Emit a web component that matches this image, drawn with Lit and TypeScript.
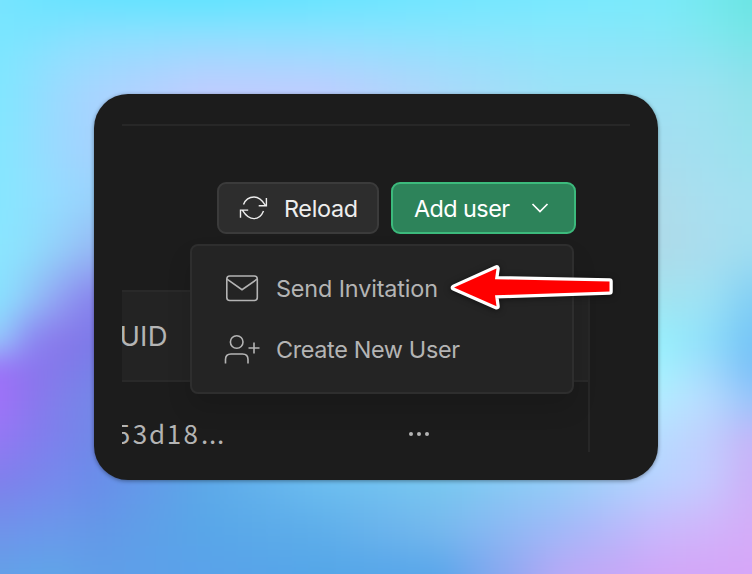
import { LitElement, html, css, svg } from "lit";
import { customElement } from "lit/decorators.js";

// Colour nodes of the backdrop; values between the nodes are interpolated.
const xs = [0, 30, 62, 94, 200, 320, 440, 560, 658, 705, 752];
const ys = [0, 30, 60, 94, 150, 200, 250, 300, 340, 370, 400, 440, 480, 530, 574];
const nodes = [
  "78e4ff 6ee4ff 6ae3ff 66e2ff 60e4ff 68e4ff 72e6ff 78e8fe 7aeafa 74e8f0 6ae4e2",
  "78e6ff 7ae4ff 80e2ff 86e1ff 88e1ff 88e2ff 86e5fe 86e8fc 84e8f8 7ee8f0 74e6e6",
  "7ee6ff 88e2ff 92dfff 9adbff a8d6ff a6d8ff 9cdefc 92e4fa 90e4f6 8ee4f2 84e2ea",
  "80e6ff 8ce0ff 9cd9ff a8d4ff c0ccff c0ccff acd8fa 9ce2f6 9ee2f4 9ce2f0 92e2ea",
  "84e6ff 90e0ff 9cd8ff a4d2fe c0ccff b8d0ff a8d8fa a0e0f4 a6def0 a2e0f0 9ae2ee",
  "86e6ff 8ee2ff 96daff 98d2fc a0c8f8 a0ccf8 a4d8f8 a4dcf2 aedcea a8dff0 a4e0f0",
  "8ae6ff 8edefc 94ccf8 96b8f4 98b0f4 a0ccf8 a4d8f8 a8dcf0 aedae8 aaddee a0def0",
  "88e2fe 92c4f8 909cf2 8680ec 8498f0 98b8f4 9ccff4 a0dcf2 a2e4f0 9ee2f4 82cef4",
  "96ccfc 8c84f2 8878ea 7c78e8 789cec 80b8f4 90ccf4 a0e0f8 98f0fc 90e0fa 74c4f6",
  "9c70f8 8c74ee 827aea 7680e8 74a0ec 80bcf4 90ccf4 a0e8fa a4f2fe a4dcfc 7cc0f8",
  "a072fa 8c76ee 7e80ea 7486e8 6ca4ec 7cbcf4 90ccf4 a0e8fa b4ecff b8dcff 98c4fa",
  "9478f4 847cee 7a82ec 7088e8 64a4ec 74c0f4 84ccf4 a0d8fa b8dcff c0d0fe c4b4f8",
  "807fec 7a84ec 748aec 6a8cea 5ca8e8 6cbef0 78c8f0 94cef8 b8d4ff c4ccff ccb0f8",
  "7092ea 6c96ec 6a98ea 6498e8 58a6e8 5eaeea 76b8ee a0b8f8 c8b8fc d0b4fa d4acf8",
  "64a0e8 60a4e8 60a4e8 609ee8 5aa2ea 54a6e8 5aa6ea b8a8f6 d0a6f8 d4a6f8 d6a6f8",
].map((row) =>
  row.split(" ").map((c) => [0, 2, 4].map((k) => parseInt(c.slice(k, k + 2), 16)))
);

const STEP = 14;

function locate(stops: number[], v: number): [number, number] {
  const c = Math.max(0, Math.min(stops[stops.length - 1], v));
  let i = 0;
  while (i < stops.length - 2 && c > stops[i + 1]) i++;
  return [i, (c - stops[i]) / (stops[i + 1] - stops[i])];
}

function colourAt(x: number, y: number): string {
  const [i, u] = locate(xs, x);
  const [j, v] = locate(ys, y);
  const mix = [0, 1, 2].map((k) => {
    const top = nodes[j][i][k] * (1 - u) + nodes[j][i + 1][k] * u;
    const bottom = nodes[j + 1][i][k] * (1 - u) + nodes[j + 1][i + 1][k] * u;
    return Math.round(top * (1 - v) + bottom * v);
  });
  return `rgb(${mix.join(",")})`;
}

const cells: unknown[] = [];
for (let y = -42; y < 616; y += STEP) {
  for (let x = -42; x < 794; x += STEP) {
    cells.push(svg`<rect x=${x} y=${y} width=${STEP + 1} height=${STEP + 1} fill=${colourAt(x + STEP / 2, y + STEP / 2)}/>`);
  }
}

@customElement("app-root")
export class AppRoot extends LitElement {
  static styles = css`
    :host { display: flex; position: relative; width: 752px; height: 574px; overflow: hidden; align-items: center; justify-content: center; background: #86dcff; }
    svg { display: block; flex: none; }
    .backdrop { position: absolute; inset: 0; }
    .card { position: relative; box-sizing: border-box; width: 564px; height: 386px; border-radius: 34px; background: #1c1c1c; padding: 30px 28px 28px; box-shadow: 0 1px 4px rgba(0, 0, 0, .4); }
    .rule { height: 2px; background: #272727; }
    .toolbar { display: flex; gap: 12px; justify-content: flex-end; padding: 56px 54px 0 0; }
    .btn { box-sizing: border-box; height: 52px; border: 2px solid #3b3b3b; border-radius: 9px; background: #2d2d2d; color: #ededed; display: flex; align-items: center; padding: 0; }
    .reload { width: 162px; padding-left: 19.5px; }
    .reload .label { margin-left: 15px; }
    .add { width: 185px; border-color: #3cba7c; background: #2d835a; color: #fff; padding-left: 20.5px; }
    .add .chev { margin-left: 19.5px; }
    .label { overflow: visible; }
    .table { width: 468px; height: 162px; margin-top: 56px; box-sizing: border-box; border-right: 2px solid #272727; overflow: hidden; }
    .head { box-sizing: border-box; height: 92px; border-top: 2px solid #292929; border-bottom: 2px solid #292929; background: #232323; color: #b4b4b4; display: flex; align-items: center; }
    .row { display: flex; height: 70px; color: #b4b4b4; }
    .uid { width: 286px; }
    .dots { margin-top: 49px; }
    .menu { position: absolute; left: 96px; top: 150px; width: 384px; height: 150px; box-sizing: border-box; background: #242424; border: 2px solid #2e2e2e; border-radius: 8px; padding: 12px 0 0 32px; box-shadow: 0 14px 24px rgba(0, 0, 0, .12); }
    .item { height: 61px; display: flex; align-items: center; color: #b4b4b4; }
    .ico { margin-right: 14px; }
    .pointer { position: absolute; left: 350px; top: 165px; filter: drop-shadow(0 1px 3px rgba(0, 0, 0, .5)); }
    .t { font-family: Inter, "Open Sans", sans-serif; font-size: 23.4px; fill: currentColor; }
    .t.head-text { font-size: 27.5px; }
    .t.mono { font-family: "Noto Sans CJK SC", "Noto Sans", sans-serif; font-size: 26px; text-anchor: middle; }
  `;

  private text(s: string, w: number, baseline = 25) {
    return html`<svg class="label" width=${w} height="34"><text class="t" x="0" y=${baseline} textLength=${w} lengthAdjust="spacing">${s}</text></svg>`;
  }

  render() {
    return html`
      <svg class="backdrop" width="752" height="574">
        <defs><filter id="soft" filterUnits="userSpaceOnUse" x="-42" y="-42" width="836" height="658" color-interpolation-filters="sRGB"><feGaussianBlur stdDeviation="11"/></filter></defs>
        <g filter="url(#soft)">${cells}</g>
      </svg>
      <div class="card">
        <div class="rule"></div>
        <div class="toolbar">
          <button class="btn reload">
            <svg width="30" height="30" viewBox="0 0 30 30" fill="none" stroke="#ededed" stroke-width="1.4"><path d="M4.500 11.500C6.500 6.500 10.500 4 15 4c5 0 8.500 3.500 11.500 8.500M27.400 5v7.700h-7.700M24.500 18C22.500 23 19.500 25.600 15 25.600c-5 0-8.500-3.500-11.500-8.300M1.500 24.800v-7.700h7.700"/></svg>
            ${this.text("Reload", 74, 25.5)}
          </button>
          <button class="btn add">
            ${this.text("Add user", 96, 25.5)}
            <svg class="chev" width="22" height="22" viewBox="0 0 22 22" fill="none" stroke="#fff" stroke-width="1.700"><path d="M3.500 7l7.500 7.500L18.500 7"/></svg>
          </button>
        </div>
        <div class="table">
          <div class="head"><svg width="60" height="34"><text class="t head-text" x="-2.500" y="27" textLength="48">UID</text></svg></div>
          <div class="row">
            <div class="uid"><svg width="110" height="70"><text class="t mono" x="1 18 35 52 68.700 82.500 90.500 98.500" y="62">53d18...</text></svg></div>
            <svg class="dots" width="22" height="6" fill="#b4b4b4"><circle cx="3" cy="3" r="2"/><circle cx="11" cy="3" r="2"/><circle cx="19" cy="3" r="2"/></svg>
          </div>
        </div>
        <div class="menu">
          <div class="item">
            <svg class="ico" width="38" height="34" viewBox="0 0 38 34" fill="none" stroke="#b4b4b4" stroke-width="1.600"><rect x="2.800" y="4" width="30.500" height="24.500" rx="3"/><path d="M3 7.200l15 10.500L33 7.200"/></svg>
            ${this.text("Send Invitation", 162)}
          </div>
          <div class="item">
            <svg class="ico" width="38" height="34" viewBox="0 0 38 34" fill="none" stroke="#b4b4b4" stroke-width="1.600"><circle cx="12.700" cy="9" r="6.300"/><path d="M1.500 30.500v-4c0-3.500 2-5.500 5.500-5.500h11.500c3.500 0 5.500 2 5.500 5.500v4M30 9.500v11M24.500 15h11"/></svg>
            ${this.text("Create New User", 184)}
          </div>
        </div>
        <svg class="pointer" width="176" height="56" viewBox="444 259 176 56">
          <path d="M454 287.600L496.500 268.500 495 279.300 609.500 281.500V291.500L495 295.300 496.500 306.200Z" fill="#f00" stroke="#fff" stroke-width="6.500" stroke-linejoin="round" paint-order="stroke"/>
        </svg>
      </div>`;
  }
}
